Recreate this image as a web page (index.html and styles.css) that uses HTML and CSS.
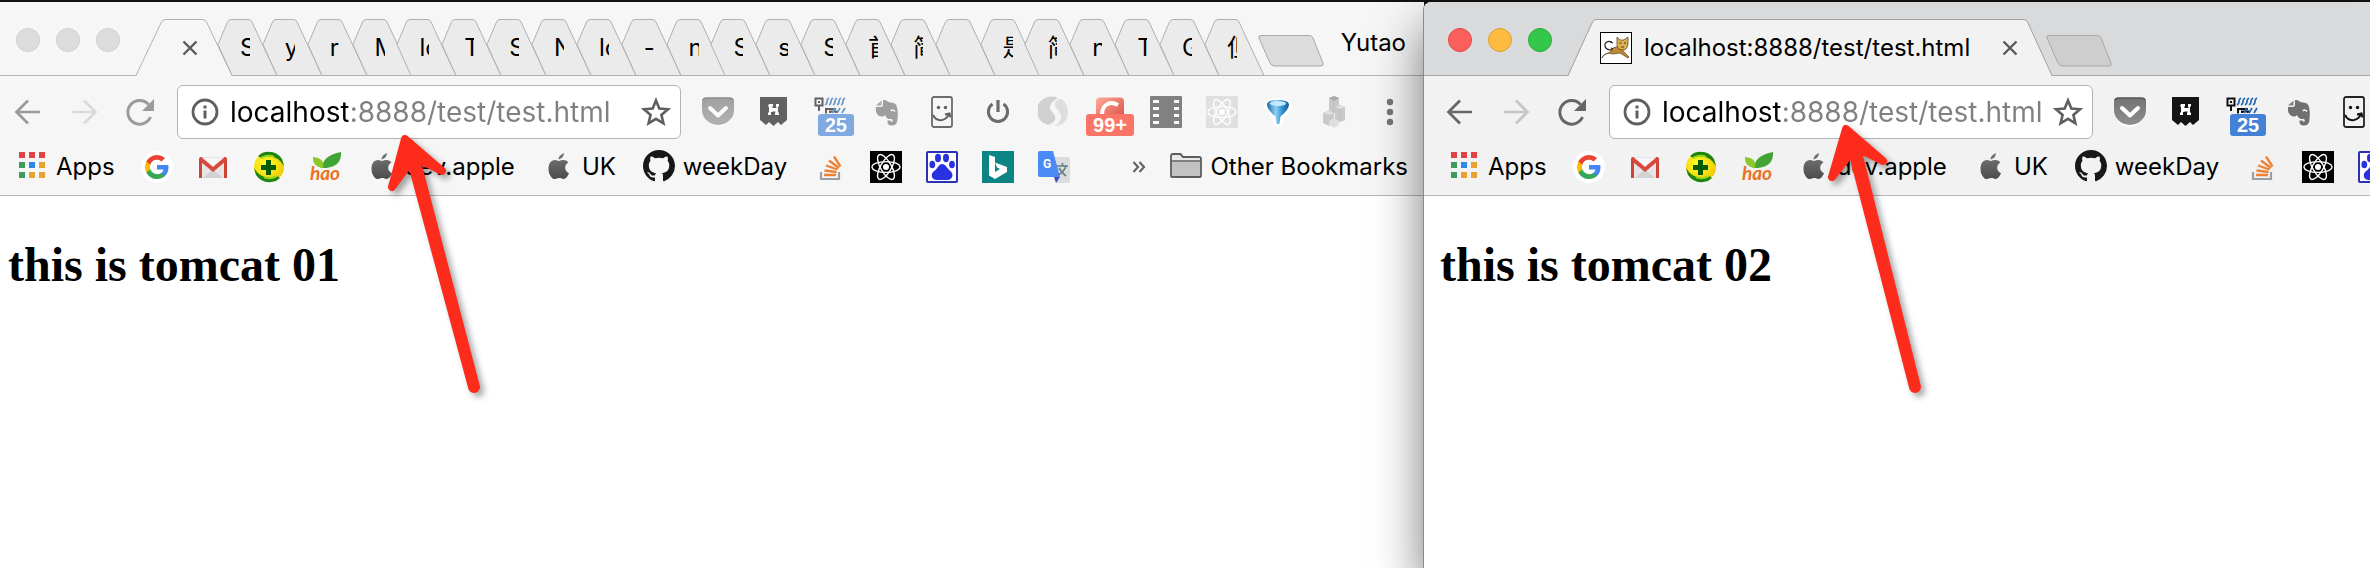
FILE: index.html
```html
<!DOCTYPE html>
<html lang="en">
<head>
<meta charset="utf-8">
<title>localhost:8888/test/test.html</title>
<link rel="stylesheet" href="styles.css">
</head>
<body>
<svg class="sprite" aria-hidden="true">
  <defs>
    <linearGradient id="g-apple" x1="0" y1="0" x2="0" y2="1"><stop offset="0" stop-color="#777"/><stop offset="1" stop-color="#4c4c4c"/></linearGradient>
    <radialGradient id="g-360" cx=".4" cy=".4" r=".7"><stop offset="0" stop-color="#ffff2a"/><stop offset="1" stop-color="#efc400"/></radialGradient>
    <linearGradient id="g-pocket" x1="0" y1="0" x2="0" y2="1"><stop offset="0" stop-color="#747474"/><stop offset="1" stop-color="#8e8e8e"/></linearGradient>
    <linearGradient id="g-funnel" x1="0" y1="0" x2="1" y2="0"><stop offset="0" stop-color="#1b6ca8"/><stop offset=".4" stop-color="#8fd0f4"/><stop offset=".7" stop-color="#2f8fce"/><stop offset="1" stop-color="#125a92"/></linearGradient>
    <linearGradient id="g-red" x1="0" y1="0" x2="1" y2="1"><stop offset="0" stop-color="#ffab9c"/><stop offset="1" stop-color="#d84a3c"/></linearGradient>
  </defs>
  <symbol id="i-back" viewBox="0 0 32 32"><path d="M28 16H5M16 4.500L4.500 16 16 27.500" fill="none" stroke="currentColor" stroke-width="2.700"/></symbol>
  <symbol id="i-forward" viewBox="0 0 32 32"><path d="M4 16h23M16 4.500L27.500 16 16 27.500" fill="none" stroke="currentColor" stroke-width="2.700"/></symbol>
  <symbol id="i-reload" viewBox="0 0 32 32"><path d="M26.500 21A11.800 11.800 0 1 1 24.500 8.500" fill="none" stroke="currentColor" stroke-width="3"/><path d="M30 3v12H18z" fill="currentColor"/></symbol>
  <symbol id="i-info" viewBox="0 0 32 32"><circle cx="16" cy="16" r="12" fill="none" stroke="currentColor" stroke-width="2.800"/><path d="M14.500 9.500h3v3h-3zM14.500 14.500h3v8h-3z" fill="currentColor"/></symbol>
  <symbol id="i-star" viewBox="0 0 32 32"><path d="M16 4.500l3.300 8 8.700.700-6.600 5.700 2 8.400L16 22.800l-7.400 4.500 2-8.400L4 13.200l8.700-.700z" fill="none" stroke="currentColor" stroke-width="2.600"/></symbol>
  <symbol id="i-close" viewBox="0 0 16 16"><path d="M1.500 1.500l13 13M14.500 1.500l-13 13" stroke="#5a5a5a" stroke-width="2.400" fill="none"/></symbol>
  <symbol id="i-menu" viewBox="0 0 32 32"><g fill="#777"><circle cx="16" cy="6" r="3.200"/><circle cx="16" cy="16" r="3.200"/><circle cx="16" cy="26" r="3.200"/></g></symbol>

  <symbol id="i-pocket" viewBox="0 0 32 32"><path d="M1 4q0-2 2-2h26q2 0 2 2v10a15 15 0 0 1-30 0z" fill="#fff" transform="translate(0 2)"/><path d="M0 5q0-3 3-3h26q3 0 3 3v9a16 15 0 0 1-32 0z" fill="url(#g-pocket)"/><path d="M1 4q1-2 3-2h24q2 0 3 2" fill="none" stroke="#555" stroke-width="1.500"/><path d="M8 12l8 7.500 8-7.500" fill="none" stroke="#fff" stroke-width="4" stroke-linecap="round" stroke-linejoin="round"/></symbol>
  <symbol id="i-h" viewBox="0 0 32 32"><path d="M2 1h27v23l-6 5-3-3-4.500 4-4.500-4-3 3-6-5z" fill="#141414"/><path d="M11 8h4v3l-1 1h5l-1-1V8h3v2l-1 1v5l1 1v2h-4v-3h-4v3h-3v-2l1-1v-5l-1-1z" fill="#fff"/><path d="M14.500 10.500h3M14.500 16h3" stroke="#141414"/></symbol>
  <symbol id="i-qr" viewBox="0 0 32 32"><path d="M1.500 2.500h7v7h-7zM5 10v5M12 17v-4h10M12 13.500v4M16 17v-1.500h6V17" fill="none" stroke="#111" stroke-width="2"/><path d="M4 5h2v2H4z" fill="#111"/><path d="M11 9q2-1 2-3.500t2-3.500M15 9q2-1 2-3.500t2-3.500M19 9q2-1 2-3.500t2-3.500M23 9q2-1 2-3.500t2-3.500M27 9q2-1 2-3.500t2-3.500M18 17l3-5M23 17l3-5M28 17l3-5" fill="none" stroke="#2468b4" stroke-width="1.800"/></symbol>
  <symbol id="i-elephant" viewBox="0 0 32 32"><path d="M13 4v5q0 2-2 2H6q-1 8 5 9.500 3 .500 4-1.500 1 3 4 4h3q1.500 1 .500 2.500-1.500 1-2-1h-3q-.500 5 4 5 6 0 6-6 1-9-1-14-1-2.500-5-3-3 0-4-1-1-2-4.500-1.500z" fill="#707070"/><path d="M6 9.500l5.500-5v5z" fill="#808080"/><path d="M21 15q2-2 4 .500" stroke="#fff" stroke-width="1.500" fill="none"/></symbol>
  <symbol id="i-smile" viewBox="0 0 32 32"><rect x="6" y="1" width="20" height="30" rx="2" fill="none" stroke="#222" stroke-width="1.800"/><circle cx="12.500" cy="11.500" r="1.700" fill="#111"/><circle cx="19.500" cy="11.500" r="1.700" fill="#111"/><path d="M7 19q3 6 9 5 5-1 7-6M19 18.500l4.500-1 1 4" fill="none" stroke="#111" stroke-width="2"/></symbol>
  <symbol id="i-power" viewBox="0 0 32 32"><path d="M10.500 8a9.600 9.600 0 1 0 11 0" fill="none" stroke="#222" stroke-width="3"/><path d="M16 4v12" stroke="#222" stroke-width="3.200"/></symbol>
  <symbol id="i-s" viewBox="0 0 32 32"><path d="M20 2A14.500 14.500 0 1 0 10 29q9-3 7-9-2-4-5-7-1-6 8-11z" fill="#d0d0d0"/><path d="M22 2.500q-7 3-5 8 5 5 6 10 0 6-7 9.500 13 0 14-13 0-11-8-14.500z" fill="#dedede"/></symbol>
  <symbol id="i-c" viewBox="0 0 32 32"><rect x="2" y="1.500" width="28" height="24" rx="4" fill="url(#g-red)"/><path d="M24 9q-7-4-12 0-4 3-4 10" fill="none" stroke="#fff" stroke-width="4"/></symbol>
  <symbol id="i-film" viewBox="0 0 32 32"><rect width="32" height="32" rx="1" y="0" fill="#444"/><g fill="#fff"><path d="M3 4h6v3H3zM3 11h6v3H3zM3 18h6v3H3zM3 25h6v3H3zM24 4h5v3h-5zM24 11h5v3h-5zM24 18h5v3h-5zM24 25h5v3h-5z"/></g></symbol>
  <symbol id="i-atom" viewBox="0 0 32 32"><g fill="none" stroke="#fff" stroke-width="1.400"><ellipse cx="16" cy="16" rx="14" ry="5.400"/><ellipse cx="16" cy="16" rx="14" ry="5.400" transform="rotate(60 16 16)"/><ellipse cx="16" cy="16" rx="14" ry="5.400" transform="rotate(120 16 16)"/></g><circle cx="16" cy="16" r="3" fill="#fff"/></symbol>
  <symbol id="i-funnel" viewBox="0 0 32 32"><path d="M5 10q0-5 11-5t11 5q0 4-8 10l-1 7q-2 2-4 0l-1-7Q5 14 5 10z" fill="#fff" stroke="#fff" stroke-width="6" stroke-linejoin="round"/><path d="M5 8.500q0-4.500 11-4.500t11 4.500q0 5-8.500 12l-1 7q-1.500 1.500-3 0l-1-7Q5 13.500 5 8.500z" fill="url(#g-funnel)"/><ellipse cx="16" cy="7.500" rx="8" ry="2.500" fill="#c5e8fb"/></symbol>
  <symbol id="i-blocks" viewBox="0 0 32 32"><path d="M11 2l5-2 5 2v13l-5 2-5-2zM17 11l5-2 5 2v13l-5 2-5-2zM5 17l6-3 5 3v10l-5 3-6-3z" fill="#c9c9c9"/><path d="M11 2l5-2 5 2-5 3z" fill="#aaa"/><path d="M17 11l5-2 5 2-5 2zM5 17l6-3 5 3-5 2zM11 25l5-3 5 3v4l-5 3-5-3z" fill="#dedede"/><path d="M16 5v12M22 13v12" stroke="#bebebe"/></symbol>

  <symbol id="i-apps" viewBox="0 0 32 32"><path d="M3 2h6v6H3zM13 2h6v6h-6zM23 2h6v6h-6z" fill="#e04343"/><path d="M3 12h6v6H3zM3 22h6v6H3z" fill="#3f9a5f"/><path d="M13 12h6v6h-6z" fill="#2f87e8"/><path d="M23 12h6v6h-6zM13 22h6v6h-6zM23 22h6v6h-6z" fill="#e8a233"/></symbol>
  <symbol id="i-google" viewBox="0 0 32 32"><circle cx="16" cy="16" r="16" fill="#fff"/><g transform="translate(4 4)"><path d="M23.500 12.300c0-.800-.100-1.600-.200-2.400H12v4.600h6.500a5.500 5.500 0 0 1-2.400 3.600v3h3.900c2.300-2.100 3.500-5.200 3.500-8.800z" fill="#4285f4"/><path d="M12 24c3.200 0 6-1.100 8-2.900l-3.900-3a7.200 7.200 0 0 1-10.800-3.800h-4v3.100A12 12 0 0 0 12 24z" fill="#34a853"/><path d="M5.300 14.300a7.200 7.200 0 0 1 0-4.600V6.600h-4a12 12 0 0 0 0 10.800z" fill="#fbbc05"/><path d="M12 4.800c1.800 0 3.300.600 4.600 1.800L20 3.200A12 12 0 0 0 1.300 6.600l4 3.100A7.200 7.200 0 0 1 12 4.800z" fill="#ea4335"/></g></symbol>
  <symbol id="i-gmail" viewBox="0 0 32 32"><path d="M3 6h26v21H3z" fill="#e6e6e6"/><path d="M6 27l10-9 10 9z" fill="#d2d2d2"/><path d="M4 7h24L16 18z" fill="#f5f5f5"/><path d="M2 8q0-2 2-2h1v21H2zM30 8q0-2-2-2h-1v21h3z" fill="#cf4238"/><path d="M3 7.500l13 11 13-11" fill="none" stroke="#d9483d" stroke-width="4"/></symbol>
  <symbol id="i-360" viewBox="0 0 32 32"><circle cx="16" cy="16" r="15" fill="url(#g-360)"/><path d="M9 2Q22-2 29 8l2 7q-5-8-11-9Q14 5 8 7L5 5z" fill="#1c8410"/><path d="M23 30Q10 34 3 24l-2-7q5 8 11 9 6 1 12-1l3 2z" fill="#1c8410"/><path d="M8 7Q16 3 21 6M24 25q-8 4-13 1" stroke="#a0d820" stroke-width="2" fill="none"/><path d="M13 9h5v5h5v5h-5v5h-5v-5H8v-5h5z" fill="#055c05"/></symbol>
  <symbol id="i-apple" viewBox="0 0 32 32"><path d="M22 3q0 5-5.500 6.500Q16.500 5 22 3zM17 11q3-1.500 5-1 3 .300 4.500 2.600-3.500 2-3.300 5.500.200 3.600 3.800 5.200-2 5-5 5.700-2 0-3.500-.900-2-.500-4 .400-2 .900-3.500.200Q6 25 6.500 17q1-6.500 6-7 1.500 0 4.500 1z" fill="url(#g-apple)"/></symbol>
  <symbol id="i-github" viewBox="0 0 16 16"><path fill="#191717" d="M8 0C3.580 0 0 3.580 0 8c0 3.540 2.290 6.530 5.470 7.590.400.070.550-.170.550-.380 0-.190-.010-.820-.010-1.490-2.010.370-2.530-.490-2.690-.940-.090-.230-.480-.940-.820-1.130-.280-.150-.680-.520-.010-.530.630-.010 1.080.580 1.230.820.720 1.210 1.870.870 2.330.660.070-.520.280-.870.510-1.070-1.780-.200-3.640-.890-3.640-3.950 0-.870.310-1.590.820-2.150-.080-.200-.360-1.020.080-2.120 0 0 .670-.210 2.200.820a7.600 7.600 0 0 1 4 0c1.530-1.040 2.200-.820 2.200-.820.440 1.100.160 1.920.080 2.120.510.560.820 1.270.820 2.150 0 3.070-1.870 3.750-3.650 3.950.290.250.540.730.540 1.480 0 1.070-.010 1.930-.010 2.200 0 .210.150.460.550.380A8 8 0 0 0 16 8c0-4.420-3.580-8-8-8z"/></symbol>
  <symbol id="i-stack" viewBox="0 0 32 32"><path d="M7 21v7h18v-7" fill="none" stroke="#9b9fa3" stroke-width="2.200"/><path d="M10 24h12M10.500 19.500l12 1.500M12 14.500l11.500 4M15 9.500l10 7.500M20 5.500l6.500 10" stroke="#ee8234" stroke-width="2.300"/></symbol>
  <symbol id="i-baidu" viewBox="0 0 32 32"><rect x="1" y="1" width="30" height="30" rx="1" fill="#fff" stroke="#2b31b4" stroke-width="2"/><g fill="#2932e1"><ellipse cx="12" cy="7" rx="3" ry="4.200"/><ellipse cx="20" cy="7" rx="3" ry="4.200"/><ellipse cx="6.300" cy="13.500" rx="2.900" ry="3.800"/><ellipse cx="26" cy="13.500" rx="2.900" ry="3.800"/><path d="M16 13q3 0 5 3.500 1.500 2 4 4 3 4 0 7-2 2-5 1.500h-8q-4 .500-5.500-2-2-3.500 1-6.500 2.500-1.500 4-4 2-3.500 4.500-3.500z"/></g></symbol>
  <symbol id="i-bing" viewBox="0 0 32 32"><path d="M0 0h32v32H0z" fill="#0c8484"/><path d="M7 4l6 2v15l5-3-3-1.500-2-5 12 4.500v5L13 28l-6-3.500z" fill="#fff"/></symbol>
  <symbol id="i-folder" viewBox="0 0 32 32"><path d="M1 26V6q0-2 2-2h7q1 0 2 2l1 1h16q2 0 2 2v17q0 1-1 1H2q-1 0-1-1z" fill="#e9e9e9" stroke="#5c5c5c" stroke-width="1.800"/><path d="M2 12h28v14H2z" fill="#c2c2c2"/><path d="M1 11h30" stroke="#5c5c5c" stroke-width="1.600"/></symbol>
  <symbol id="i-cat" viewBox="0 0 32 32"><rect x=".500" y=".500" width="31" height="31" fill="#fff" stroke="#000"/><path d="M2 26q1-4 7-5l4-5 6-2 6 7 4 4-1 1-8-5-7 1-5-1-4 2z" fill="#c08a34" stroke="#5a4420" stroke-width=".700"/><path d="M17 5l3 3h4l4-3v7q-1 6-5 6-6 0-6-6z" fill="#e0b050" stroke="#5a4420" stroke-width=".800"/><path d="M19.500 11h2M24 11h2M21 14.500l1.500 1 1.500-1" stroke="#333" fill="none"/><path d="M12 18Q4 18 5 12q2-4 7-2M10 10l3 1M11 16l2 1" fill="none" stroke="#222" stroke-width="1.200"/></symbol>
  <symbol id="i-tab" viewBox="0 0 45 57" overflow="visible"><path d="M0 56.500L-14 25.500-5 4Q-4 .500-1 .500H16Q19 .500 20 3L45 56.500z" fill="#ebebeb" stroke="#b0b0b0"/></symbol>
  <symbol id="i-newtab" viewBox="0 0 66 32"><path d="M3 .500h48q3 0 4 2.500l10 25q1 3-2 3H17q-4 0-5-3L1 3Q0 .500 3 .500z" fill="var(--newtab)" stroke="#a8a8a8"/></symbol>
</svg>

<main class="desktop">
  <section class="window window-back" aria-label="Browser window 1">
    <header>
      <div class="strip">
        <div class="lights"><button aria-label="Close window"></button><button aria-label="Minimize"></button><button aria-label="Zoom"></button></div>
        <div class="tab-active narrow">
          <svg class="shape" viewBox="0 0 96 57" aria-hidden="true"><path d="M0 57L25 4Q26.500.500 29 .500H67Q69.500.500 71 4L96 57z" fill="#f6f6f6"/><path d="M0 56.500L25 4Q26.500.500 29 .500H67Q69.500.500 71 4L96 56.500" fill="none" stroke="#b0b0b0"/></svg>
          <button class="close" aria-label="Close tab"><svg><use href="#i-close"/></svg></button>
        </div>
        <nav class="tabs" aria-label="Tabs">
          <button class="tab"><svg><use href="#i-tab"/></svg><span>S</span></button>
          <button class="tab"><svg><use href="#i-tab"/></svg><span>y</span></button>
          <button class="tab"><svg><use href="#i-tab"/></svg><span>r</span></button>
          <button class="tab"><svg><use href="#i-tab"/></svg><span>M</span></button>
          <button class="tab"><svg><use href="#i-tab"/></svg><span>lo</span></button>
          <button class="tab"><svg><use href="#i-tab"/></svg><span>T</span></button>
          <button class="tab"><svg><use href="#i-tab"/></svg><span>S</span></button>
          <button class="tab"><svg><use href="#i-tab"/></svg><span>N</span></button>
          <button class="tab"><svg><use href="#i-tab"/></svg><span>lo</span></button>
          <button class="tab"><svg><use href="#i-tab"/></svg><span>-</span></button>
          <button class="tab"><svg><use href="#i-tab"/></svg><span>n</span></button>
          <button class="tab"><svg><use href="#i-tab"/></svg><span>S</span></button>
          <button class="tab"><svg><use href="#i-tab"/></svg><span>s</span></button>
          <button class="tab"><svg><use href="#i-tab"/></svg><span>S</span></button>
          <button class="tab"><svg><use href="#i-tab"/></svg><span>首</span></button>
          <button class="tab"><svg><use href="#i-tab"/></svg><span>简</span></button>
          <button class="tab" aria-label="Blank tab"><svg><use href="#i-tab"/></svg></button>
          <button class="tab"><svg><use href="#i-tab"/></svg><span>是</span></button>
          <button class="tab"><svg><use href="#i-tab"/></svg><span>简</span></button>
          <button class="tab"><svg><use href="#i-tab"/></svg><span>n</span></button>
          <button class="tab"><svg><use href="#i-tab"/></svg><span>T</span></button>
          <button class="tab"><svg><use href="#i-tab"/></svg><span>G</span></button>
          <button class="tab"><svg><use href="#i-tab"/></svg><span>但</span></button>
        </nav>
        <button class="newtab" aria-label="New tab"><svg><use href="#i-newtab"/></svg></button>
        <button class="profile">Yutao</button>
      </div>
      <div class="toolbar">
        <div class="icons nav">
          <button aria-label="Back"><svg><use href="#i-back"/></svg></button>
          <button class="off" aria-label="Forward"><svg><use href="#i-forward"/></svg></button>
          <button aria-label="Reload"><svg><use href="#i-reload"/></svg></button>
        </div>
        <div class="omnibox">
          <svg><use href="#i-info"/></svg>
          <input type="text" aria-label="Address" value="localhost:8888/test/test.html">
          <button aria-label="Bookmark this page"><svg><use href="#i-star"/></svg></button>
        </div>
        <div class="icons ext">
          <button aria-label="Pocket"><svg><use href="#i-pocket"/></svg></button>
          <button aria-label="Web clipper"><svg><use href="#i-h"/></svg></button>
          <button aria-label="QR code"><svg><use href="#i-qr"/></svg><span class="badge">25</span></button>
          <button aria-label="Notes"><svg><use href="#i-elephant"/></svg></button>
          <button aria-label="Smile"><svg><use href="#i-smile"/></svg></button>
          <button aria-label="Power"><svg><use href="#i-power"/></svg></button>
          <button class="solid" aria-label="Switcher"><svg><use href="#i-s"/></svg></button>
          <button class="solid" aria-label="Notifications"><svg><use href="#i-c"/></svg><span class="badge alert">99+</span></button>
          <button aria-label="Video"><svg><use href="#i-film"/></svg></button>
          <button class="solid grey" aria-label="React tools"><svg><use href="#i-atom"/></svg></button>
          <button class="solid" aria-label="Filter"><svg><use href="#i-funnel"/></svg></button>
          <button class="solid" aria-label="Blocks"><svg><use href="#i-blocks"/></svg></button>
          <button class="solid" aria-label="Menu"><svg><use href="#i-menu"/></svg></button>
        </div>
      </div>
      <nav class="bookmarks" aria-label="Bookmarks">
        <a href="#apps" class="named"><svg><use href="#i-apps"/></svg>Apps</a>
        <a href="#google" aria-label="Google"><svg><use href="#i-google"/></svg></a>
        <a href="#gmail" aria-label="Gmail"><svg><use href="#i-gmail"/></svg></a>
        <a href="#360" aria-label="360"><svg><use href="#i-360"/></svg></a>
        <a href="#hao" aria-label="hao"><svg viewBox="0 0 32 32"><path d="M13 17Q14 4 32 1 33 17 13 17z" fill="#43a436"/><path d="M12 17Q3 14 4 6 16 7 14 17z" fill="#8ec727"/><text x="16" y="29" text-anchor="middle" class="hao-text">hao</text></svg></a>
        <a href="#dev" class="named"><svg><use href="#i-apple"/></svg>dev.apple</a>
        <a href="#uk" class="named"><svg><use href="#i-apple"/></svg>UK</a>
        <a href="#week" class="named"><svg><use href="#i-github"/></svg>weekDay</a>
        <a href="#stack" aria-label="Stack Overflow"><svg><use href="#i-stack"/></svg></a>
        <a href="#react" class="black" aria-label="React"><svg><use href="#i-atom"/></svg></a>
        <a href="#baidu" aria-label="Baidu"><svg><use href="#i-baidu"/></svg></a>
        <a href="#bing" aria-label="Bing"><svg><use href="#i-bing"/></svg></a>
        <a href="#translate" aria-label="Translate"><svg viewBox="0 0 32 32"><path d="M14 6h16q2 0 2 2v22q0 2-2 2H18z" fill="#dcdcdc"/><path d="M16 26h6l-4 6z" fill="#3a50b8"/><path d="M2 0h13l7 26H2q-2 0-2-2V2q0-2 2-2z" fill="#4a8af4"/><text x="9" y="17" text-anchor="middle" class="g-text">G</text><path d="M19 15h11M24.500 12v3M28 15q-2 6-8 9M21 17q3 5 7 8" fill="none" stroke="#607d8b" stroke-width="1.600"/></svg></a>
        <button class="more" aria-label="More bookmarks"><svg viewBox="0 0 14 12"><path d="M1.500 1l4.500 5-4.500 5M7.500 1l4.500 5-4.500 5" fill="none" stroke="#666" stroke-width="2.200"/></svg></button>
        <a href="#other" class="named"><svg><use href="#i-folder"/></svg>Other Bookmarks</a>
      </nav>
    </header>
    <article><h1>this is tomcat 01</h1></article>
    <svg class="pointer" viewBox="0 0 110 280" aria-hidden="true"><path d="M25 14L62 46 36 33 96 262a2 2 0 0 1-4 0L31 36 12 62z"/></svg>
  </section>

  <section class="window window-front" aria-label="Browser window 2">
    <header>
      <div class="strip">
        <div class="lights"><button aria-label="Close window"></button><button aria-label="Minimize"></button><button aria-label="Zoom"></button></div>
        <div class="tab-active wide">
          <svg class="shape" viewBox="0 0 484 57" aria-hidden="true"><path d="M0 57L24 4Q25.500.500 28 .500H456Q458.500.500 460 4L484 57z" fill="#f2f2f2"/><path d="M0 56.500L24 4Q25.500.500 28 .500H456Q458.500.500 460 4L484 56.500" fill="none" stroke="#a0a0a0"/></svg>
          <svg class="favicon" aria-hidden="true"><use href="#i-cat"/></svg>
          <span class="title">localhost:8888/test/test.html</span>
          <button class="close" aria-label="Close tab"><svg><use href="#i-close"/></svg></button>
        </div>
        <button class="newtab" aria-label="New tab"><svg><use href="#i-newtab"/></svg></button>
      </div>
      <div class="toolbar">
        <div class="icons nav">
          <button aria-label="Back"><svg><use href="#i-back"/></svg></button>
          <button class="off" aria-label="Forward"><svg><use href="#i-forward"/></svg></button>
          <button aria-label="Reload"><svg><use href="#i-reload"/></svg></button>
        </div>
        <div class="omnibox">
          <svg><use href="#i-info"/></svg>
          <input type="text" aria-label="Address" value="localhost:8888/test/test.html">
          <button aria-label="Bookmark this page"><svg><use href="#i-star"/></svg></button>
        </div>
        <div class="icons ext">
          <button aria-label="Pocket"><svg><use href="#i-pocket"/></svg></button>
          <button aria-label="Web clipper"><svg><use href="#i-h"/></svg></button>
          <button aria-label="QR code"><svg><use href="#i-qr"/></svg><span class="badge">25</span></button>
          <button aria-label="Notes"><svg><use href="#i-elephant"/></svg></button>
          <button aria-label="Smile"><svg><use href="#i-smile"/></svg></button>
        </div>
      </div>
      <nav class="bookmarks" aria-label="Bookmarks">
        <a href="#apps" class="named"><svg><use href="#i-apps"/></svg>Apps</a>
        <a href="#google" aria-label="Google"><svg><use href="#i-google"/></svg></a>
        <a href="#gmail" aria-label="Gmail"><svg><use href="#i-gmail"/></svg></a>
        <a href="#360" aria-label="360"><svg><use href="#i-360"/></svg></a>
        <a href="#hao" aria-label="hao"><svg viewBox="0 0 32 32"><path d="M13 17Q14 4 32 1 33 17 13 17z" fill="#43a436"/><path d="M12 17Q3 14 4 6 16 7 14 17z" fill="#8ec727"/><text x="16" y="29" text-anchor="middle" class="hao-text">hao</text></svg></a>
        <a href="#dev" class="named"><svg><use href="#i-apple"/></svg>dev.apple</a>
        <a href="#uk" class="named"><svg><use href="#i-apple"/></svg>UK</a>
        <a href="#week" class="named"><svg><use href="#i-github"/></svg>weekDay</a>
        <a href="#stack" aria-label="Stack Overflow"><svg><use href="#i-stack"/></svg></a>
        <a href="#react" class="black" aria-label="React"><svg><use href="#i-atom"/></svg></a>
        <a href="#baidu" aria-label="Baidu"><svg><use href="#i-baidu"/></svg></a>
      </nav>
    </header>
    <article><h1>this is tomcat 02</h1></article>
    <svg class="pointer" viewBox="0 0 110 280" aria-hidden="true"><path d="M26 4L63 36 37 23 97 262a2 2 0 0 1-4 0L32 26 12 52z"/></svg>
  </section>
</main>
</body>
</html>
```
FILE: styles.css
```css
* { box-sizing: border-box; }

body {
  margin: 0;
  overflow: hidden;
  background: #111;
  font-family: Inter, "Noto Sans CJK SC", sans-serif;
  font-size: 24px;
  color: #000;
}

button {
  margin: 0;
  padding: 0;
  border: 0;
  background: none;
  font: inherit;
  color: inherit;
}

a { color: inherit; text-decoration: none; }
svg { display: block; }
.sprite { position: absolute; width: 0; height: 0; }

.desktop {
  display: grid;
  grid-template-columns: minmax(0, 1424fr) minmax(0, 946fr);
  min-height: 100vh;
  padding-top: 2px;
}

.window {
  position: relative;
  background: #fff;
}

.window-back {
  --chrome: #f6f6f6;
  --strip: #f6f6f6;
  --line: #b3b3b3;
  --nav: #9b9b9b;
  --newtab: #dcdcdc;
  margin-left: -8px;
  border-top-left-radius: 8px;
}

.window-front {
  --chrome: #f2f2f2;
  --strip: #d9dadb;
  --line: #a6a6a6;
  --nav: #666;
  --newtab: #cecece;
  border-top-left-radius: 8px;
  box-shadow: -1px 0 0 #8a8a8a, 0 24px 50px rgba(0, 0, 0, 0.55);
}

.window header {
  overflow: hidden;
  border-radius: 8px 0 0;
  background: var(--chrome);
  border-bottom: 1px solid #b6b6b6;
}

/* tab strip */
.strip {
  display: flex;
  align-items: flex-end;
  height: 74px;
  padding: 0 18px 0 24px;
  background: linear-gradient(var(--line), var(--line)) bottom / 100% 1px no-repeat var(--strip);
}

.lights {
  display: flex;
  flex: none;
  gap: 16px;
  margin: 0 16px 24px 0;
}

.lights button {
  width: 24px;
  height: 24px;
  border: 1px solid #cfcfcf;
  border-radius: 50%;
  background: #dcdcdc;
}

.window-front .lights button:nth-child(1) { background: #fc605c; border-color: #de4643; }
.window-front .lights button:nth-child(2) { background: #fdbc40; border-color: #dd9f33; }
.window-front .lights button:nth-child(3) { background: #34c84a; border-color: #27aa35; }

.tab-active {
  position: relative;
  display: flex;
  flex: none;
  align-items: center;
  height: 57px;
}

.narrow { width: 96px; padding-left: 46px; z-index: 1; }
.wide { width: 484px; padding: 0 34px 0 32px; }

.shape {
  position: absolute;
  inset: 0;
  width: 100%;
  height: 100%;
}

.tab-active > :not(.shape) { position: relative; }
.favicon { width: 32px; height: 32px; flex: none; }
.title { flex: 1; padding-left: 12px; white-space: nowrap; }
.close svg { width: 16px; height: 16px; }

.tabs { display: flex; flex: 1; min-width: 0; }

.tab {
  position: relative;
  flex: 1 1 0;
  min-width: 0;
  height: 57px;
  padding-left: 8px;
  text-align: left;
}

.tab svg {
  position: absolute;
  top: 0;
  left: 0;
  width: 45px;
  height: 57px;
  overflow: visible;
}

.tab span {
  position: relative;
  display: block;
  width: 10px;
  overflow: hidden;
  line-height: 32px;
  white-space: nowrap;
}

.newtab { flex: none; margin: 0 0 9px -6px; }
.newtab svg { width: 66px; height: 32px; }
.profile { flex: none; margin: 0 0 17px 17px; line-height: 32px; }

/* toolbar */
.toolbar {
  display: flex;
  align-items: center;
  gap: 21px;
  padding: 9px 18px 0 20px;
}

.icons { display: flex; flex: none; gap: 24px; }
.icons button { position: relative; }
.icons svg { width: 32px; height: 32px; }
.nav { color: var(--nav); }
.nav .off { opacity: 0.3; }
.window-back .ext button:not(.solid) > svg,
.window-back .ext button:not(.solid) > .badge { opacity: 0.65; }
.grey svg { background: #e0e0e0; }

.omnibox {
  display: flex;
  flex: 1 1 0;
  align-items: center;
  min-width: 0;
  height: 54px;
  padding: 0 8px 0 11px;
  border: 1px solid #b3b3b3;
  border-radius: 6px;
  background: #fff;
  color: #5f5f5f;
}

.window-front .omnibox { flex: 0 0 484px; }
.omnibox svg { flex: none; width: 32px; height: 32px; }
.omnibox button { flex: none; }

.omnibox input {
  flex: 1 1 0;
  width: 0;
  min-width: 0;
  height: 40px;
  padding: 0;
  margin-left: 9px;
  border: 0;
  outline: 0;
  background: linear-gradient(90deg, #000 118px, #808080 118px) text;
  -webkit-text-fill-color: transparent;
  font: 28px Inter, sans-serif;
}

.badge {
  position: absolute;
  top: 18px;
  left: 4px;
  width: 36px;
  border-radius: 3px;
  background: #4281d6;
  color: #fff;
  font: bold 20px/22px "Liberation Sans", sans-serif;
  text-align: center;
}

.badge.alert { left: -8px; width: 48px; background: #fb7468; }

/* bookmarks bar */
.bookmarks {
  display: flex;
  align-items: center;
  gap: 24px;
  height: 56px;
  padding: 0 16px 0 24px;
  line-height: 34px;
  white-space: nowrap;
}

.bookmarks a { display: flex; flex: none; gap: 8px; }
.bookmarks .named { padding-right: 3px; }
.bookmarks .named:first-child { padding-right: 2px; }
.bookmarks .named:last-child { padding-right: 0; }
.bookmarks a svg { width: 32px; height: 32px; }
.black svg { background: #000; }
.more { margin-left: auto; }
.more svg { width: 14px; height: 12px; }

.hao-text { font: italic bold 19px Lato, sans-serif; fill: #ea7226; }
.g-text { font: bold 12px Roboto, sans-serif; fill: #fff; }

/* page */
h1 {
  margin: 41px 16px;
  font: bold 48px "Liberation Serif", serif;
}

.pointer {
  position: absolute;
  top: 123px;
  left: 388px;
  width: 110px;
  height: 280px;
  fill: #fd2b1c;
  stroke: #fd2b1c;
  stroke-width: 8;
  stroke-linejoin: round;
  filter: drop-shadow(4px 4px 3px rgba(0, 0, 0, 0.35));
}

.window-front .pointer { left: 396px; }
```
